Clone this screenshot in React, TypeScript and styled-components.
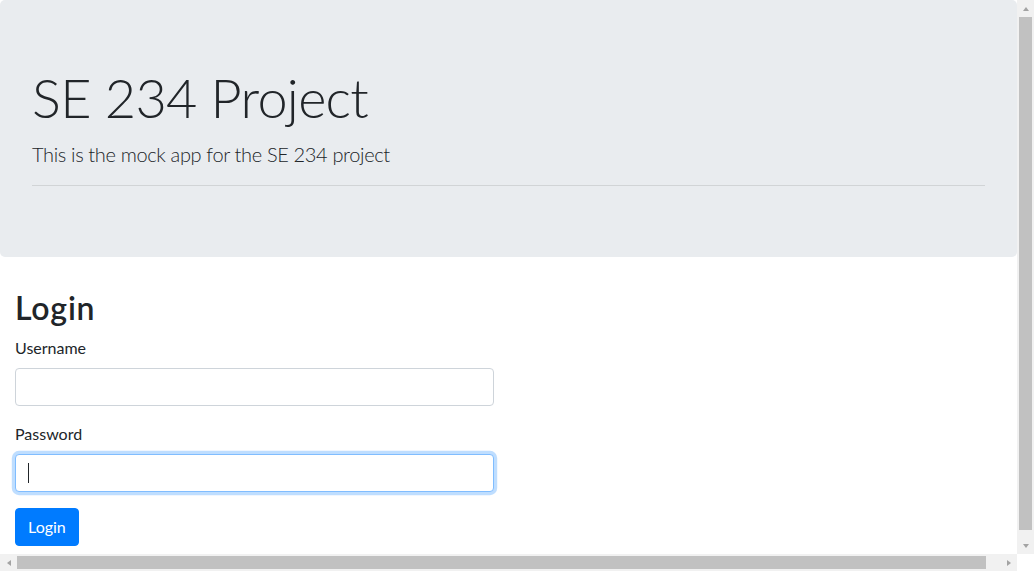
import React from "react";
import styled, { createGlobalStyle, css } from "styled-components";

const GlobalStyle = createGlobalStyle`
  html, body {
    margin: 0;
    padding: 0;
    overflow: hidden;
  }
  body {
    font-family: Lato, "Open Sans", Arial, sans-serif;
    font-size: 16px;
    line-height: 1.5;
    color: #212529;
    background: #fff;
  }
  *, *::before, *::after {
    box-sizing: border-box;
  }
`;

/* browser frame: page viewport plus the two scrollbars */
const Frame = styled.div`
  display: grid;
  grid-template-columns: 1fr 17px;
  grid-template-rows: 1fr 17px;
  width: 100vw;
  height: 100vh;
`;

const Viewport = styled.div`
  overflow: hidden;
  min-width: 0;
`;

const ScrollBar = styled.div<{ $vertical?: boolean }>`
  display: flex;
  flex-direction: ${(p) => (p.$vertical ? "column" : "row")};
  background: #f1f1f1;
`;

const Track = styled.div<{ $vertical?: boolean }>`
  flex: 1;
  display: flex;
  flex-direction: ${(p) => (p.$vertical ? "column" : "row")};
`;

const Thumb = styled.div<{ $vertical?: boolean }>`
  background: #c1c1c1;
  ${(p) =>
    p.$vertical
      ? css`
          margin: 0 2px;
        `
      : css`
          margin: 2px 0;
        `}
`;

const ArrowButton = styled.div<{ $dir: "up" | "down" | "left" | "right" }>`
  flex: 0 0 17px;
  width: 17px;
  height: 17px;
  display: flex;
  align-items: center;
  justify-content: center;
  &::before {
    content: "";
    width: 0;
    height: 0;
    ${(p) =>
      p.$dir === "up" &&
      css`
        border-left: 3.5px solid transparent;
        border-right: 3.5px solid transparent;
        border-bottom: 4px solid #a3a3a3;
      `}
    ${(p) =>
      p.$dir === "down" &&
      css`
        border-left: 3.5px solid transparent;
        border-right: 3.5px solid transparent;
        border-top: 4px solid #a3a3a3;
      `}
    ${(p) =>
      p.$dir === "left" &&
      css`
        border-top: 3.5px solid transparent;
        border-bottom: 3.5px solid transparent;
        border-right: 4px solid #a3a3a3;
      `}
    ${(p) =>
      p.$dir === "right" &&
      css`
        border-top: 3.5px solid transparent;
        border-bottom: 3.5px solid transparent;
        border-left: 4px solid #a3a3a3;
      `}
  }
`;

const Corner = styled.div`
  background: #fff;
`;

const Page = styled.div`
  width: 100%;
`;

const Jumbotron = styled.header`
  background: #e9ecef;
  border-radius: 5px;
  padding: 64px 32px 71px;
  margin-bottom: 32px;
`;

const Title = styled.h1`
  margin: 0 0 8px;
  font-size: 54px;
  font-weight: 300;
  line-height: 67.2px;
  letter-spacing: -0.7px;
`;

const Lead = styled.p`
  margin: 0;
  font-size: 20px;
  font-weight: 300;
  line-height: 1.5;
  letter-spacing: -0.35px;
`;

const Divider = styled.hr`
  margin: 16px 0 0;
  border: 0;
  border-top: 1px solid rgba(0, 0, 0, 0.1);
`;

const Container = styled.main`
  padding: 0 15px;
`;

const Row = styled.div`
  display: flex;
  flex-wrap: wrap;
  margin: 0 -15px;
`;

const HalfCol = styled.div`
  flex: 0 0 50%;
  max-width: 50%;
  padding: 0 15px;
`;

const Heading = styled.h2`
  margin: 0 0 8px;
  font-size: 32px;
  font-weight: 600;
  line-height: 1.2;
  letter-spacing: 0.8px;
`;

const FormGroup = styled.div`
  margin-bottom: 16px;
`;

const Label = styled.label`
  display: block;
  margin-bottom: 8px;
`;

const Input = styled.input<{ $focused?: boolean }>`
  display: block;
  width: 100%;
  height: 38px;
  padding: 6px 12px;
  font: inherit;
  color: #495057;
  background: #fff;
  border: 1px solid #ced4da;
  border-radius: 4px;
  outline: none;
  ${(p) =>
    p.$focused &&
    css`
      border-color: #80bdff;
      box-shadow: 0 0 0 3.2px rgba(0, 123, 255, 0.25);
      /* text caret */
      background: #fff linear-gradient(#212529, #212529) no-repeat 12px 8px / 1px 20px;
    `}
`;

const Button = styled.button`
  display: inline-block;
  padding: 6px 12px;
  font: inherit;
  line-height: 1.5;
  color: #fff;
  background: #007bff;
  border: 1px solid #007bff;
  border-radius: 4px;
  cursor: pointer;
`;

export default function App() {
  return (
    <>
      <GlobalStyle />
      <Frame>
        <Viewport>
          <Page>
            <Jumbotron>
              <Title>SE 234 Project</Title>
              <Lead>This is the mock app for the SE 234 project</Lead>
              <Divider />
            </Jumbotron>
            <Container>
              <Row>
                <HalfCol>
                  <Heading>Login</Heading>
                  <form onSubmit={(e) => e.preventDefault()}>
                    <FormGroup>
                      <Label htmlFor="username">Username</Label>
                      <Input id="username" type="text" />
                    </FormGroup>
                    <FormGroup>
                      <Label htmlFor="password">Password</Label>
                      <Input id="password" type="password" $focused />
                    </FormGroup>
                    <Button type="submit">Login</Button>
                  </form>
                </HalfCol>
              </Row>
            </Container>
          </Page>
        </Viewport>
        <ScrollBar $vertical>
          <ArrowButton $dir="up" />
          <Track $vertical>
            <Thumb $vertical style={{ flex: "0 0 513px" }} />
          </Track>
          <ArrowButton $dir="down" />
        </ScrollBar>
        <ScrollBar>
          <ArrowButton $dir="left" />
          <Track>
            <Thumb style={{ flex: "0 0 969px" }} />
          </Track>
          <ArrowButton $dir="right" />
        </ScrollBar>
        <Corner />
      </Frame>
    </>
  );
}
